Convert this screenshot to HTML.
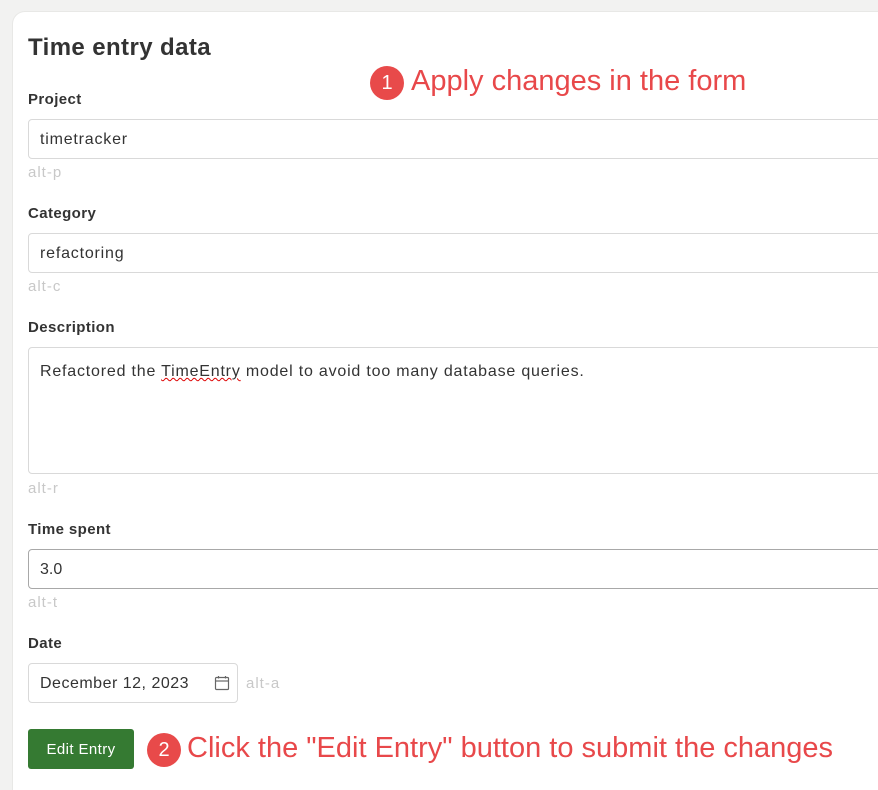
<!DOCTYPE html>
<html style="width:878px;height:790px;overflow:hidden"><head><style>
*{box-sizing:border-box;margin:0;padding:0}
body{width:878px;height:790px;background:#f2f2f1;position:relative;overflow:hidden;font-family:"Liberation Sans",sans-serif;color:#333}
.card{position:absolute;left:12px;top:11px;width:900px;height:779px;background:#fff;border-radius:13px 13px 0 0;border:1px solid #e8e8e6;border-bottom:none}
.a{position:absolute}
h1{position:absolute;left:28px;top:34px;font-size:24px;font-weight:bold;color:#333;letter-spacing:0.4px}
.lbl{position:absolute;left:28px;font-size:15px;font-weight:bold;color:#333;letter-spacing:0.4px;margin-top:1px}
.inp{position:absolute;left:28px;width:870px;height:40px;border:1px solid #d9d9d9;border-radius:4px;font-size:16px;padding:11px 11px;color:#333;letter-spacing:0.8px;white-space:nowrap}
.hint{position:absolute;left:28px;font-size:15px;color:#c8c8c8;letter-spacing:1px;margin-top:1px}
.ann{position:absolute;color:#e8484a;font-size:29px;white-space:nowrap;margin-top:1px}
.dot{position:absolute;width:34px;height:34px;border-radius:50%;background:#e84a4a;color:#fff;font-size:20px;text-align:center;line-height:34px}
</style></head><body>
<div class="card"></div>
<h1>Time entry data</h1>
<div class="dot" style="left:370px;top:66px">1</div>
<div class="ann" style="left:411px;top:64px">Apply changes in the form</div>

<div class="lbl" style="top:90px">Project</div>
<div class="inp" style="top:119px">timetracker</div>
<div class="hint" style="top:163px">alt-p</div>

<div class="lbl" style="top:204px">Category</div>
<div class="inp" style="top:233px">refactoring</div>
<div class="hint" style="top:277px">alt-c</div>

<div class="lbl" style="top:318px">Description</div>
<div class="inp" style="top:347px;height:127px;padding-top:15px">Refactored the <span style="text-decoration:underline wavy #d00;text-decoration-thickness:1px">TimeEntry</span> model to avoid too many database queries.</div>
<div class="hint" style="top:479px">alt-r</div>

<div class="lbl" style="top:520px">Time spent</div>
<div class="inp" style="top:549px;border-color:#a8a8a8;letter-spacing:0">3.0</div>
<div class="hint" style="top:593px">alt-t</div>

<div class="lbl" style="top:634px">Date</div>
<div class="inp" style="top:663px;width:210px;letter-spacing:0.5px">December 12, 2023</div>
<svg class="a" style="left:214px;top:675px" width="16" height="16" viewBox="0 0 16 16" fill="none" stroke="#666" stroke-width="1.2"><rect x="1.5" y="2.5" width="13" height="12" rx="1"/><line x1="1.5" y1="6" x2="14.5" y2="6"/><line x1="4.5" y1="1" x2="4.5" y2="3.5"/><line x1="11.5" y1="1" x2="11.5" y2="3.5"/></svg>
<div class="hint" style="left:246px;top:674px">alt-a</div>

<div class="a" style="left:28px;top:729px;width:106px;height:40px;background:#357a32;border-radius:3px;color:#fff;font-size:15px;text-align:center;line-height:41px;letter-spacing:0.4px">Edit Entry</div>
<div class="dot" style="left:147px;top:733px">2</div>
<div class="ann" style="left:187px;top:731px">Click the "Edit Entry" button to submit the changes</div>
</body></html>
